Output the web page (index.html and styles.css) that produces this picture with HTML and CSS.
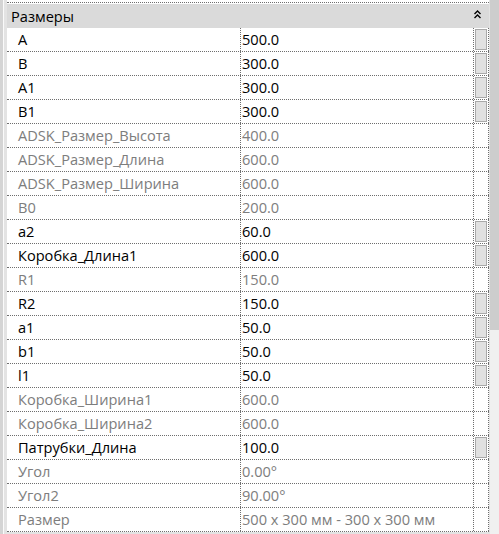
FILE: index.html
```html
<!DOCTYPE html>
<html>
<head>
<meta charset="utf-8">
<link rel="stylesheet" href="styles.css">
</head>
<body>
<div class="panel">
  <div class="edge"></div>
  <div class="grid">
    <div class="group">
      <span class="group-title">Размеры</span>
      <svg class="collapse" width="7" height="9" viewBox="0 0 7 9"><path d="M0.5 4 L3.5 1 L6.5 4 M0.5 8 L3.5 5 L6.5 8" fill="none" stroke="#000" stroke-width="1.4"/></svg>
    </div>
    <div class="row"><div class="name">A</div><div class="val">500.0</div><div class="btn"><span class="b"></span></div></div>
    <div class="row"><div class="name">B</div><div class="val">300.0</div><div class="btn"><span class="b"></span></div></div>
    <div class="row"><div class="name">A1</div><div class="val">300.0</div><div class="btn"><span class="b"></span></div></div>
    <div class="row"><div class="name">B1</div><div class="val">300.0</div><div class="btn"><span class="b"></span></div></div>
    <div class="row ro"><div class="name">ADSK_Размер_Высота</div><div class="val">400.0</div><div class="btn"></div></div>
    <div class="row ro"><div class="name">ADSK_Размер_Длина</div><div class="val">600.0</div><div class="btn"></div></div>
    <div class="row ro"><div class="name">ADSK_Размер_Ширина</div><div class="val">600.0</div><div class="btn"></div></div>
    <div class="row ro"><div class="name">B0</div><div class="val">200.0</div><div class="btn"></div></div>
    <div class="row"><div class="name">a2</div><div class="val">60.0</div><div class="btn"><span class="b"></span></div></div>
    <div class="row"><div class="name">Коробка_Длина1</div><div class="val">600.0</div><div class="btn"><span class="b"></span></div></div>
    <div class="row ro"><div class="name">R1</div><div class="val">150.0</div><div class="btn"></div></div>
    <div class="row"><div class="name">R2</div><div class="val">150.0</div><div class="btn"><span class="b"></span></div></div>
    <div class="row"><div class="name">a1</div><div class="val">50.0</div><div class="btn"><span class="b"></span></div></div>
    <div class="row"><div class="name">b1</div><div class="val">50.0</div><div class="btn"><span class="b"></span></div></div>
    <div class="row"><div class="name">l1</div><div class="val">50.0</div><div class="btn"><span class="b"></span></div></div>
    <div class="row ro"><div class="name">Коробка_Ширина1</div><div class="val">600.0</div><div class="btn"></div></div>
    <div class="row ro"><div class="name">Коробка_Ширина2</div><div class="val">600.0</div><div class="btn"></div></div>
    <div class="row"><div class="name">Патрубки_Длина</div><div class="val">100.0</div><div class="btn"><span class="b"></span></div></div>
    <div class="row ro"><div class="name">Угол</div><div class="val">0.00°</div><div class="btn"></div></div>
    <div class="row ro"><div class="name">Угол2</div><div class="val">90.00°</div><div class="btn"></div></div>
    <div class="row ro"><div class="name">Размер</div><div class="val">500 x 300 мм - 300 x 300 мм</div><div class="btn"></div></div>
  </div>
  <div class="scroll"><div class="thumb"></div></div>
</div>
</body>
</html>
```
FILE: styles.css
```css
html, body {
  margin: 0;
  padding: 0;
  background: #e3e3e3;
}
body {
  width: 499px;
  height: 534px;
  overflow: hidden;
  font-family: "Open Sans", "Noto Sans", sans-serif;
  font-size: 14.6px;
  color: #000;
}
.panel {
  display: flex;
  height: 534px;
}
.edge {
  width: 3px;
  flex: none;
  background: #d4d4d4;
  border-right: 1px solid #fafafa;
  margin-right: 3px;
}
.grid {
  width: 482px;
  flex: none;
  display: flex;
  flex-direction: column;
  padding-top: 1px;
  align-self: flex-start;
  background: #fff;
}
.group {
  height: 24px;
  margin-top: 1px;
  border-top: 1px dotted #6e6e6e;
  padding-top: 1px;
  background: #dadada;
  background-clip: content-box;
  display: flex;
  align-items: center;
  justify-content: space-between;
  box-sizing: content-box;
}
.group-title {
  padding-left: 4px;
  line-height: 23px;
}
.collapse {
  margin-right: 8px;
  margin-bottom: 4px;
}
.row {
  display: grid;
  grid-template-columns: 234px 233px 15px;
  height: 24px;
  box-sizing: border-box;
  border-bottom: 1px dotted #6e6e6e;
}
.name {
  padding-left: 11px;
  border-right: 1px dotted #6e6e6e;
  line-height: 22px;
  white-space: nowrap;
  overflow: hidden;
}
.val {
  padding-left: 1px;
  border-right: 1px dotted #6e6e6e;
  line-height: 22px;
  white-space: nowrap;
  overflow: hidden;
}
.btn {
  border-right: 1px dotted #6e6e6e;
  display: flex;
  justify-content: center;
  align-items: center;
}
.b {
  width: 10px;
  height: 19px;
  background: #e1e1e1;
  border: 1px solid #a9a9a9;
}
.ro .name, .ro .val {
  color: #7d7d7d;
}
.scroll {
  width: 10px;
  flex: none;
  margin-left: 1px;
  background: #f0f0f0;
  display: flex;
  flex-direction: column;
}
.thumb {
  height: 330px;
  background: #cdcdcd;
}
```
